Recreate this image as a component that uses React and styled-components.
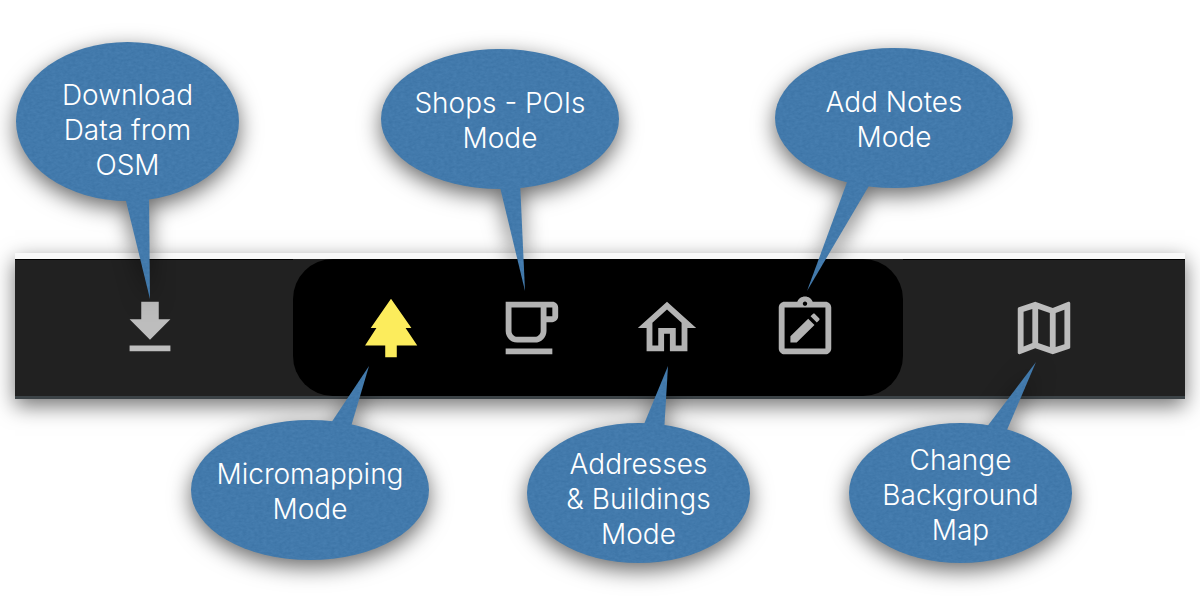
import React from "react";
import styled, { createGlobalStyle } from "styled-components";

const GlobalStyle = createGlobalStyle`
  *, *::before, *::after { box-sizing: border-box; }
  body { margin: 0; background: #fff; font-family: Inter, "Liberation Sans", sans-serif; }
`;

const Page = styled.main`
  padding: 253px 15px 200px;
  overflow: hidden;
`;

const Bar = styled.nav`
  display: grid;
  grid-template-columns: 278fr 610fr 282fr;
  background: #212121;
  border-top: 6px solid #f8f8f8;
  border-bottom: 3px solid #3c4347;
  box-shadow: 0 7px 20px rgba(0, 0, 0, 0.55);
`;

const Side = styled.div`
  display: flex;
  align-items: center;
  justify-content: center;
  border-top: 1px solid #000;
  padding-right: ${(p) => p.$inset || 0}px;
`;

const ModeGroup = styled.div`
  display: flex;
  align-items: center;
  justify-content: center;
  gap: 68px;
  height: 137px;
  padding-top: 1px;
  background: #000;
  border-radius: 40px;
`;

const Tool = styled.div`
  position: relative;
  width: 70px;
  height: 70px;
`;

const ToolButton = styled.button`
  display: block;
  width: 70px;
  height: 70px;
  padding: 0;
  border: 0;
  background: none;
  color: ${(p) => p.$color};
  cursor: pointer;
`;

const Icon = styled.svg`
  display: block;
  width: 70px;
  height: 70px;
  fill: currentColor;
`;

const Callout = styled.div`
  position: absolute;
  z-index: 1;
  left: ${(p) => p.$left}px;
  top: ${(p) => p.$top}px;
  width: ${(p) => p.$width}px;
  height: ${(p) => p.$height}px;
  padding-top: ${(p) => p.$drop}px;
  display: flex;
  align-items: center;
  justify-content: center;
  pointer-events: none;
`;

const Balloon = styled.svg`
  position: absolute;
  inset: 0;
  width: 100%;
  height: 100%;
  overflow: visible;
  filter: drop-shadow(0 7px 11px rgba(0, 0, 0, 0.6));
`;

const CalloutText = styled.span`
  position: relative;
  color: #fff;
  font-size: 28px;
  font-weight: 300;
  line-height: 35px;
  text-align: center;
  white-space: pre;
`;

const Defs = styled.svg`
  position: absolute;
  width: 0;
  height: 0;
`;

const icons = {
  download: "M5 20h14v-2H5v2zM19 9h-4V3H9v6H5l7 7 7-7z",
  tree: "M17 12h2L12 2 5.05 12H7l-3.9 6h6.92v4h3.96v-4H21z",
  cup: "M16 5v8c0 1.1-.9 2-2 2H8c-1.1 0-2-.9-2-2V5h10m4-2H4v10c0 2.21 1.79 4 4 4h6c2.21 0 4-1.79 4-4v-3h2c1.11 0 2-.9 2-2V5c0-1.11-.89-2-2-2zm-2 5V5h2v3h-2zm2 11H4v2h16v-2z",
  house: "M12 5.69l5 4.5V18h-2v-6H9v6H7v-7.81l5-4.5M12 3L2 12h3v8h6v-6h2v6h6v-8h3L12 3z",
  notes:
    "M19 3h-4.35C14.3 1.95 13.25 1.2 12 1.2S9.7 1.95 9.35 3H5c-1.1 0-2 .9-2 2v14c0 1.1.9 2 2 2h14c1.1 0 2-.9 2-2V5c0-1.1-.9-2-2-2zm-7-.1c.41 0 .75.34.75.75s-.34.75-.75.75-.75-.34-.75-.75.34-.75.75-.75zM19 19H5V5h14v14zM7 17h2.15l6.1-6.05-2.15-2.15L7 14.85V17zM16.05 10.15l.8-.8c.2-.2.2-.5 0-.7L15.4 7.2c-.2-.2-.5-.2-.7 0l-.8.8 2.15 2.15z",
  map: "M20.5 3l-.16.03L15 5.1 9 3 3.36 4.9c-.21.07-.36.25-.36.48V20.5c0 .28.22.5.5.5l.16-.03L9 18.9l6 2.1 5.64-1.9c.21-.07.36-.25.36-.48V3.5c0-.28-.22-.5-.5-.5zM10 5.47l4 1.4v11.66l-4-1.4V5.47zm-5 .99l3-1.01v11.7l-3 1.16V6.46zm14 11.08l-3 1.01V6.86l3-1.16v11.84z",
};

// Balloon boxes are measured from the tool's top-left corner, tails from the balloon's.
const download = {
  id: "download", color: "#bdbdbd", text: "Download\nData from\nOSM",
  left: -99, top: -251, width: 223, height: 159, drop: 18,
  tail: "109,155 134,257 133,150",
};
const modes = [
  {
    id: "tree", color: "#fcec5c", pressed: true, text: "Micromapping\nMode",
    left: -165, top: 127, width: 238, height: 140, drop: 4,
    tail: "138,6 178,-54 159,10",
  },
  {
    id: "cup", color: "#b3b3b3", text: "Shops - POIs\nMode",
    left: -113, top: -244, width: 238, height: 140, drop: 4,
    tail: "118,134 144,242 139,132",
  },
  {
    id: "house", color: "#b3b3b3", text: "Addresses\n& Buildings\nMode",
    left: -105, top: 130, width: 223, height: 140, drop: 12,
    tail: "115,6 141,-57 137,10",
  },
  {
    id: "notes", color: "#b3b3b3", text: "Add Notes\nMode",
    left: 5, top: -245, width: 238, height: 140, drop: 4,
    tail: "75,126 32,243 98,131",
  },
];
const map = {
  id: "map", color: "#bdbdbd", text: "Change\nBackground\nMap",
  left: -160, top: 130, width: 223, height: 140, drop: 4,
  tail: "134,9 187,-61 155,14",
};

function ToolWithCallout({ tool }) {
  const textId = `callout-${tool.id}`;
  const rx = tool.width / 2;
  const ry = tool.height / 2;
  return (
    <Tool>
      <ToolButton
        type="button"
        $color={tool.color}
        aria-labelledby={textId}
        aria-pressed={tool.pressed}
      >
        <Icon viewBox="0 0 24 24" aria-hidden="true">
          <path d={icons[tool.id]} fillRule="evenodd" />
        </Icon>
      </ToolButton>
      <Callout
        $left={tool.left}
        $top={tool.top}
        $width={tool.width}
        $height={tool.height}
        $drop={tool.drop}
      >
        <Balloon aria-hidden="true">
          <g fill="#4279ab" filter="url(#paper)">
            <ellipse cx={rx} cy={ry} rx={rx} ry={ry} />
            <polygon points={tool.tail} />
          </g>
        </Balloon>
        <CalloutText id={textId}>{tool.text}</CalloutText>
      </Callout>
    </Tool>
  );
}

export default function App() {
  return (
    <>
      <GlobalStyle />
      <Defs aria-hidden="true">
        <filter id="paper" x="-5%" y="-5%" width="110%" height="110%" colorInterpolationFilters="sRGB">
          <feTurbulence type="fractalNoise" baseFrequency="0.25 0.4" numOctaves="3" seed="4" result="noise" />
          <feColorMatrix
            in="noise"
            type="matrix"
            values="0.06 0 0 0 0.23  0.06 0 0 0 0.447  0.06 0 0 0 0.643  0 0 0 0 1"
            result="grain"
          />
          <feComposite in="grain" in2="SourceGraphic" operator="in" />
        </filter>
      </Defs>
      <Page>
        <Bar aria-label="Main toolbar">
          <Side $inset={8}>
            <ToolWithCallout tool={download} />
          </Side>
          <ModeGroup role="group" aria-label="Modes">
            {modes.map((tool) => (
              <ToolWithCallout key={tool.id} tool={tool} />
            ))}
          </ModeGroup>
          <Side>
            <ToolWithCallout tool={map} />
          </Side>
        </Bar>
      </Page>
    </>
  );
}
